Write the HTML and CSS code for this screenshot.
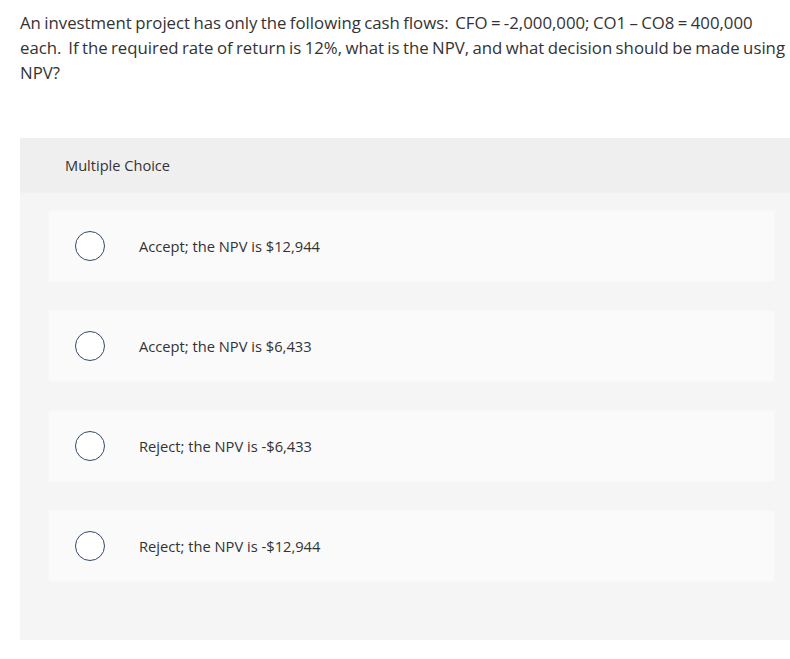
FILE: index.html
```html
<!DOCTYPE html>
<html>
<head>
<meta charset="utf-8">
<link rel="stylesheet" href="styles.css">
</head>
<body>
<div class="question">An investment project has only the following cash flows:&nbsp; CFO = -2,000,000; CO1 – CO8 = 400,000<br>each.&nbsp; If the required rate of return is 12%, what is the NPV, and what decision should be made using<br>NPV?</div>
<div class="panel">
  <div class="panel-head">Multiple Choice</div>
  <div class="panel-body">
    <div class="option"><span class="radio"></span><span class="label">Accept; the NPV is $12,944</span></div>
    <div class="option"><span class="radio"></span><span class="label">Accept; the NPV is $6,433</span></div>
    <div class="option"><span class="radio"></span><span class="label">Reject; the NPV is -$6,433</span></div>
    <div class="option"><span class="radio"></span><span class="label">Reject; the NPV is -$12,944</span></div>
  </div>
</div>
</body>
</html>
```
FILE: styles.css
```css
html, body {
  margin: 0;
  padding: 0;
  background: #ffffff;
}
body {
  font-family: "Open Sans", "Liberation Sans", sans-serif;
  color: #333333;
  overflow: hidden;
}
.question {
  padding: 10px 0 0 20px;
  font-size: 16.8px;
  word-spacing: -1px;
  white-space: nowrap;
  line-height: 25px;
  height: 138px;
  box-sizing: border-box;
}
.panel {
  margin-left: 20px;
  background: #f5f5f5;
}
.panel-head {
  height: 55px;
  background: #efefef;
  display: flex;
  align-items: center;
  padding-left: 45px;
  font-size: 14.6px;
  color: #333;
  border-bottom: 1px solid #f1f1f1;
  box-sizing: border-box;
}
.panel-body {
  padding: 17px 15px 58px 28px;
  display: flex;
  flex-direction: column;
  gap: 28px;
}
.option {
  height: 72px;
  background: #fafafa;
  border: 1px solid #f7f7f7;
  border-radius: 2px;
  box-sizing: border-box;
  display: flex;
  align-items: center;
  padding-left: 26px;
}
.radio {
  width: 30px;
  height: 30px;
  border-radius: 50%;
  border: 1.4px solid #34496a;
  box-sizing: border-box;
  background: #ffffff;
  flex: none;
}
.label {
  margin-left: 34px;
  font-size: 14.7px;
  color: #333;
}
```
